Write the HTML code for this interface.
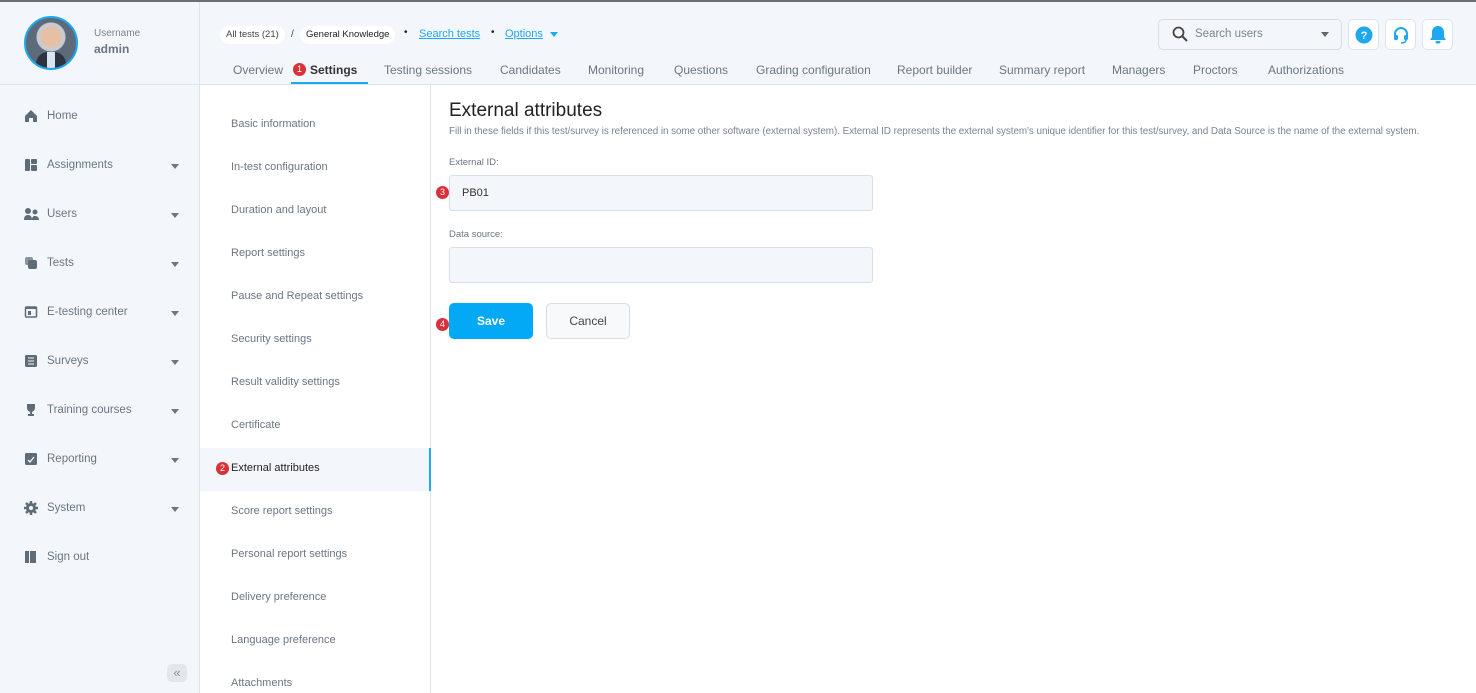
<!DOCTYPE html>
<html><head><meta charset="utf-8"><style>
*{box-sizing:border-box;margin:0;padding:0}
body{width:1476px;height:693px;overflow:hidden;background:#fff;font-family:"Liberation Sans",sans-serif;position:relative;color:#5f6b76}
.a{position:absolute;white-space:nowrap}
.topline{left:0;top:0;width:1476px;height:2px;background:#6b6e72}
.side{left:0;top:2px;width:200px;height:691px;background:#f3f7fb;border-right:1px solid #dde5ec}
.head{left:200px;top:2px;width:1276px;height:83px;background:#f3f7fb;border-bottom:1px solid #dde5ec}
.headl{left:0;top:84px;width:200px;height:1px;background:#dde5ec}
.sub{left:200px;top:85px;width:231px;height:608px;background:#fff;border-right:1px solid #dde5ec}
.nav{font-size:11.5px;color:#6b7682}
.nav svg{position:absolute;left:-23px;top:-1px}
.caret{position:absolute;left:124px;top:5px;width:0;height:0;border-left:4px solid transparent;border-right:4px solid transparent;border-top:5px solid #6b7682}
.tab{font-size:12px;color:#6b7682;top:63px}
.si{font-size:11px;color:#6b7682;left:231px}
.badge{display:inline-block;width:13px;height:13px;border-radius:50%;background:#d9313a;color:#fff;font-size:9px;text-align:center;line-height:13px;position:absolute}
.inp{left:449px;width:424px;height:36px;background:#f3f7fb;border:1px solid #d6dee6;border-radius:3px}
.ib{top:19px;width:31px;height:31px;background:#fff;border:1px solid #dde5ec;border-radius:5px}
</style></head><body>
<div class="a topline"></div>
<div class="a side"></div>
<div class="a head"></div>
<div class="a headl"></div>
<div class="a sub"></div>

<div class="a" style="left:24px;top:16px;width:54px;height:54px;border-radius:50%;border:2px solid #1da8f0;background:radial-gradient(circle at 50% 38%,#e6c0a5 0 10px,#c9cbd0 11px 14px,#5d6a7a 15px);overflow:hidden"><div style="position:absolute;left:10px;top:34px;width:30px;height:20px;background:#2c3442;border-radius:12px 12px 0 0"></div><div style="position:absolute;left:21px;top:34px;width:8px;height:18px;background:#d8e4f0"></div></div>
<div class="a" style="left:94px;top:28px;font-size:10px;color:#7a8590">Username</div>
<div class="a" style="left:94px;top:42px;font-size:12px;color:#6b7682;font-weight:bold">admin</div>

<div class="a nav" style="left:47px;top:110px"><svg width="14" height="14" viewBox="0 0 14 14"><path d="M1 7L7 1l6 6v6H9V9H5v4H1z" fill="#5f6b76"/></svg>Home</div>
<div class="a nav" style="left:47px;top:159px"><svg width="14" height="14" viewBox="0 0 14 14"><rect x="1" y="1" width="5" height="12" rx="1" fill="#5f6b76"/><rect x="7" y="1" width="6" height="5" rx="1" fill="#5f6b76"/><rect x="7" y="7" width="6" height="6" rx="1" fill="#5f6b76"/></svg>Assignments<span class="caret"></span></div>
<div class="a nav" style="left:47px;top:208px"><svg width="15" height="14" viewBox="0 0 15 14"><circle cx="4" cy="4" r="3" fill="#5f6b76"/><circle cx="11" cy="5" r="2.5" fill="#5f6b76"/><path d="M0 13c0-4 2-5 4-5s4 1 4 5zM8 13c0-3 1-4 3-4s4 1 4 4z" fill="#5f6b76"/></svg>Users<span class="caret"></span></div>
<div class="a nav" style="left:47px;top:257px"><svg width="14" height="14" viewBox="0 0 14 14"><rect x="1" y="1" width="8" height="8" rx="2" fill="#8a949e"/><rect x="4" y="4" width="9" height="9" rx="2" fill="#5f6b76"/></svg>Tests<span class="caret"></span></div>
<div class="a nav" style="left:47px;top:306px"><svg width="14" height="14" viewBox="0 0 14 14"><rect x="1.5" y="2" width="11" height="10" rx="1" fill="none" stroke="#5f6b76" stroke-width="1.5"/><rect x="2" y="2" width="10" height="2" fill="#5f6b76"/><rect x="4" y="6" width="3" height="4" fill="#5f6b76"/></svg>E-testing center<span class="caret"></span></div>
<div class="a nav" style="left:47px;top:355px"><svg width="14" height="14" viewBox="0 0 14 14"><rect x="1" y="1" width="12" height="12" rx="1.5" fill="#5f6b76"/><path d="M4 4h6M4 7h6M4 10h6" stroke="#f3f7fb" stroke-width="1"/></svg>Surveys<span class="caret"></span></div>
<div class="a nav" style="left:47px;top:404px"><svg width="14" height="14" viewBox="0 0 14 14"><path d="M3 1h8v4a4 4 0 0 1-8 0zM6 9h2v2h2v2H4v-2h2z" fill="#5f6b76"/></svg>Training courses<span class="caret"></span></div>
<div class="a nav" style="left:47px;top:453px"><svg width="14" height="14" viewBox="0 0 14 14"><rect x="1" y="1" width="12" height="12" rx="1.5" fill="#5f6b76"/><path d="M4 8l2 2 4-5" stroke="#f3f7fb" stroke-width="1.3" fill="none"/></svg>Reporting<span class="caret"></span></div>
<div class="a nav" style="left:47px;top:502px"><svg width="14" height="14" viewBox="0 0 14 14"><circle cx="7" cy="7" r="5" fill="#5f6b76"/><path d="M7 0v14M0 7h14M2 2l10 10M12 2L2 12" stroke="#5f6b76" stroke-width="2.5"/><circle cx="7" cy="7" r="2" fill="#f3f7fb"/></svg>System<span class="caret"></span></div>
<div class="a nav" style="left:47px;top:551px"><svg width="14" height="14" viewBox="0 0 14 14"><rect x="1" y="1" width="4" height="12" fill="#5f6b76"/><path d="M6 1h6v12H6z" fill="#5f6b76"/></svg>Sign out</div>
<div class="a" style="left:167px;top:664px;width:20px;height:18px;border-radius:5px;background:#e2e7ec;color:#8a949e;font-size:13px;text-align:center;line-height:17px">«</div>

<div class="a" style="left:220px;top:26px;height:18px;padding:0 6px;background:#fff;border-radius:9px;font-size:9.5px;line-height:18px;color:#444">All tests (21)</div>
<div class="a" style="left:291px;top:29px;font-size:10px;color:#444">/</div>
<div class="a" style="left:300px;top:26px;height:18px;padding:0 6px;background:#fff;border-radius:9px;font-size:9.5px;line-height:18px;color:#222">General Knowledge</div>
<div class="a" style="left:404px;top:27px;font-size:10px;color:#222">•</div>
<div class="a" style="left:419px;top:28px;font-size:11px;color:#1da8f0;text-decoration:underline">Search tests</div>
<div class="a" style="left:491px;top:27px;font-size:10px;color:#222">•</div>
<div class="a" style="left:505px;top:28px;font-size:11px;color:#1da8f0;text-decoration:underline">Options</div>
<div class="a" style="left:550px;top:32px;border-left:4px solid transparent;border-right:4px solid transparent;border-top:5px solid #1da8f0"></div>

<div class="a tab" style="left:233px">Overview</div>
<span class="badge" style="left:293px;top:63px">1</span>
<div class="a tab" style="left:310px;color:#333;font-weight:bold">Settings</div>
<div class="a" style="left:291px;top:82px;width:77px;height:2px;background:#1da8f0"></div>
<div class="a tab" style="left:384px">Testing sessions</div>
<div class="a tab" style="left:500px">Candidates</div>
<div class="a tab" style="left:588px">Monitoring</div>
<div class="a tab" style="left:674px">Questions</div>
<div class="a tab" style="left:756px">Grading configuration</div>
<div class="a tab" style="left:897px">Report builder</div>
<div class="a tab" style="left:999px">Summary report</div>
<div class="a tab" style="left:1112px">Managers</div>
<div class="a tab" style="left:1193px">Proctors</div>
<div class="a tab" style="left:1268px">Authorizations</div>

<div class="a" style="left:1158px;top:19px;width:184px;height:31px;background:#f3f7fb;border:1px solid #d6dee6;border-radius:5px"></div>
<svg class="a" style="left:1172px;top:26px" width="16" height="16" viewBox="0 0 16 16"><circle cx="6.5" cy="6.5" r="5" fill="none" stroke="#444" stroke-width="1.8"/><path d="M10 10l5 5" stroke="#444" stroke-width="2"/></svg>
<div class="a" style="left:1195px;top:28px;font-size:11.5px;color:#7a8590">Search users</div>
<div class="a" style="left:1321px;top:32px;border-left:4px solid transparent;border-right:4px solid transparent;border-top:5px solid #666"></div>
<div class="a ib" style="left:1348px"><svg style="position:absolute;left:6px;top:6px" width="18" height="18" viewBox="0 0 18 18"><circle cx="9" cy="9" r="8.5" fill="#1da8f0"/><text x="9" y="13" font-size="11" font-weight="bold" fill="#fff" text-anchor="middle" font-family="Liberation Sans">?</text></svg></div>
<div class="a ib" style="left:1385px"><svg style="position:absolute;left:6px;top:6px" width="18" height="18" viewBox="0 0 18 18"><path d="M3 10V8a6 6 0 0 1 12 0v2" fill="none" stroke="#1da8f0" stroke-width="2"/><rect x="2" y="9" width="4" height="5" rx="1.5" fill="#1da8f0"/><rect x="12" y="9" width="4" height="5" rx="1.5" fill="#1da8f0"/><path d="M14 14q0 3-5 3" fill="none" stroke="#1da8f0" stroke-width="1.5"/></svg></div>
<div class="a ib" style="left:1422px"><svg style="position:absolute;left:6px;top:5px" width="18" height="19" viewBox="0 0 18 19"><path d="M9 1a6 6 0 0 0-6 6v5l-2 3h16l-2-3V7a6 6 0 0 0-6-6z" fill="#1da8f0"/><rect x="6.5" y="16" width="5" height="2.5" rx="1.2" fill="#1da8f0"/></svg></div>

<div class="a si" style="top:118px">Basic information</div>
<div class="a si" style="top:161px">In-test configuration</div>
<div class="a si" style="top:204px">Duration and layout</div>
<div class="a si" style="top:247px">Report settings</div>
<div class="a si" style="top:290px">Pause and Repeat settings</div>
<div class="a si" style="top:333px">Security settings</div>
<div class="a si" style="top:376px">Result validity settings</div>
<div class="a si" style="top:419px">Certificate</div>
<div class="a" style="left:200px;top:448px;width:231px;height:43px;background:#f3f7fb;border-right:2px solid #1da8f0"></div>
<span class="badge" style="left:216px;top:462px">2</span>
<div class="a si" style="top:462px;color:#222">External attributes</div>
<div class="a si" style="top:505px">Score report settings</div>
<div class="a si" style="top:548px">Personal report settings</div>
<div class="a si" style="top:591px">Delivery preference</div>
<div class="a si" style="top:634px">Language preference</div>
<div class="a si" style="top:677px">Attachments</div>

<div class="a" style="left:449px;top:100px;font-size:19px;color:#222">External attributes</div>
<div class="a" style="left:449px;top:126px;font-size:9.9px;color:#7a8590;letter-spacing:-0.05px">Fill in these fields if this test/survey is referenced in some other software (external system). External ID represents the external system's unique identifier for this test/survey, and Data Source is the name of the external system.</div>
<div class="a" style="left:449px;top:157px;font-size:9.5px;color:#6b7682">External ID:</div>
<div class="a inp" style="top:175px"></div>
<span class="badge" style="left:436px;top:186px">3</span>
<div class="a" style="left:462px;top:187px;font-size:11px;color:#333">PB01</div>
<div class="a" style="left:449px;top:229px;font-size:9.5px;color:#6b7682">Data source:</div>
<div class="a inp" style="top:247px"></div>
<div class="a" style="left:449px;top:303px;width:84px;height:36px;background:#03a9f4;border-radius:5px;color:#fff;font-weight:bold;font-size:12px;text-align:center;line-height:36px">Save</div>
<span class="badge" style="left:436px;top:318px">4</span>
<div class="a" style="left:546px;top:303px;width:84px;height:36px;background:#f7f9fb;border:1px solid #d6dee6;border-radius:5px;color:#444;font-size:12px;text-align:center;line-height:34px">Cancel</div>
</body></html>
